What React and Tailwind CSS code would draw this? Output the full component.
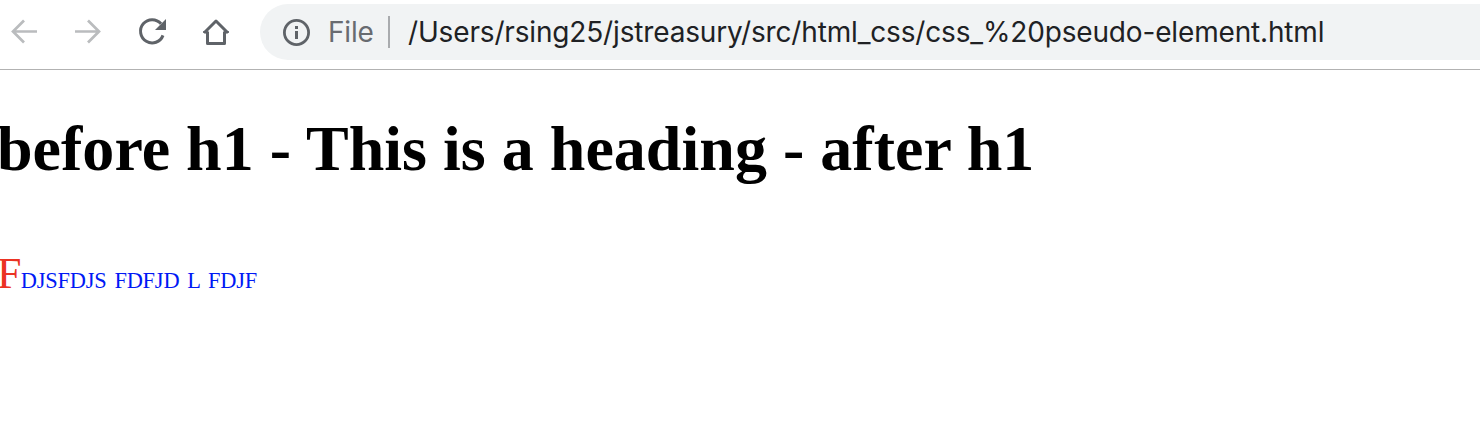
function StrokeIcon({ children, className }) {
  return (
    <svg
      viewBox="0 0 36 36"
      className={className}
      fill="none"
      stroke="currentColor"
      strokeWidth="3"
    >
      {children}
    </svg>
  );
}

export default function App() {
  return (
    <div className="h-[428px] w-full overflow-hidden bg-white">
      <header className="flex h-[70px] items-start border-b border-[#b2b2b2] pt-1">
        <nav className="flex h-14 w-[260px] shrink-0 items-center gap-7 pl-1.5">
          <StrokeIcon className="size-9 text-[#babcbe]">
            <path d="M31 17.5H7M18 6.5l-11 11 11 11" strokeWidth="2.7" />
          </StrokeIcon>
          <StrokeIcon className="size-9 text-[#babcbe]">
            <path d="M5 17.5h24M18 6.5l11 11-11 11" strokeWidth="2.7" />
          </StrokeIcon>
          <StrokeIcon className="size-9 text-[#5f6368]">
            <path d="M27 9.8A11.6 11.6 0 1 0 29 21.4" />
            <path d="M32 5v11H21z" fill="currentColor" stroke="none" />
          </StrokeIcon>
          <StrokeIcon className="size-9 text-[#5f6368]">
            <path d="M6 19 18 7l12 12M9.5 17.5v12h17v-12" strokeLinejoin="round" />
            <path d="M5 18h5M26 18h5" strokeWidth="1.5" />
          </StrokeIcon>
        </nav>
        <div className="flex h-14 flex-1 items-center rounded-l-full bg-[#f1f3f4] pl-[18px] font-['Inter',sans-serif] text-[28px] whitespace-nowrap">
          <StrokeIcon className="size-9 shrink-0 text-[#5f6368]">
            <circle cx="18.5" cy="18.5" r="12.1" strokeWidth="2.8" />
            <path d="M18.5 17v8M18.5 12v3" />
          </StrokeIcon>
          <span className="ml-3.5 w-[60px] tracking-[-0.2px] text-[#686b70]">File</span>
          <span className="h-8 w-0.5 bg-[#a9abae]" />
          <span className="ml-[18px] tracking-[-0.16px] text-[#202124]">
            /Users/rsing25/jstreasury/src/html_css/css_%20pseudo-element.html
          </span>
        </div>
      </header>
      <main className="font-['Liberation_Serif',serif] whitespace-nowrap">
        <h1 className="mt-[42px] -ml-[3px] text-[64px] leading-[74px] font-bold tracking-[0.02px] text-black">
          before h1 - This is a heading - after h1
        </h1>
        <p className="mt-[61px] -ml-[3px] text-[22.4px] leading-[54px] tracking-[-0.2px] [word-spacing:2.6px] text-[#0019f5]">
          <span className="text-[44px] tracking-[-0.8px] text-[#eb3323]">F</span>DJSFDJS FDFJD L FDJF
        </p>
      </main>
    </div>
  );
}
